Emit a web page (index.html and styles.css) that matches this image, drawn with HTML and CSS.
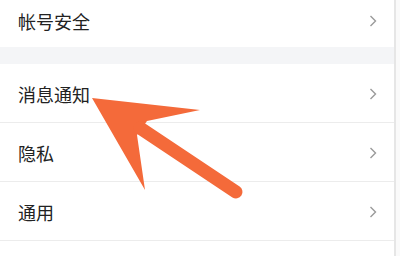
FILE: index.html
```
<!DOCTYPE html>
<html lang="zh-CN">
<head>
<meta charset="utf-8">
<title>设置</title>
<link rel="stylesheet" href="styles.css">
</head>
<body>
<div class="page">
  <div class="row first">
    <span class="label">帐号安全</span>
    <svg class="chev" width="8" height="12" viewBox="0 0 8 12"><polyline points="1.5,1 6.5,6 1.5,11" fill="none" stroke="#9a9a9a" stroke-width="1.4"/></svg>
  </div>
  <div class="gap"></div>
  <div class="row">
    <span class="label">消息通知</span>
    <svg class="chev" width="8" height="12" viewBox="0 0 8 12"><polyline points="1.5,1 6.5,6 1.5,11" fill="none" stroke="#9a9a9a" stroke-width="1.4"/></svg>
  </div>
  <div class="row">
    <span class="label">隐私</span>
    <svg class="chev" width="8" height="12" viewBox="0 0 8 12"><polyline points="1.5,1 6.5,6 1.5,11" fill="none" stroke="#9a9a9a" stroke-width="1.4"/></svg>
  </div>
  <div class="row">
    <span class="label">通用</span>
    <svg class="chev" width="8" height="12" viewBox="0 0 8 12"><polyline points="1.5,1 6.5,6 1.5,11" fill="none" stroke="#9a9a9a" stroke-width="1.4"/></svg>
  </div>
  <div class="row last"></div>
</div>
<svg class="arrow" width="400" height="256" viewBox="0 0 400 256">
  <polygon points="92,98 200,110 147,121 137,135 145,190" fill="#f46a3a"/>
  <line x1="140" y1="128" x2="236" y2="192" stroke="#f46a3a" stroke-width="13" stroke-linecap="round"/>
</svg>
</body>
</html>
```
FILE: styles.css
```
html, body {
  margin: 0;
  padding: 0;
  background: #fafafa;
  overflow: hidden;
}
body {
  width: 400px;
  height: 256px;
  position: relative;
  font-family: "Noto Sans CJK SC", "Noto Sans", sans-serif;
}
.page {
  width: 394px;
  height: 256px;
  overflow: hidden;
  background: #fff;
  border-right: 2px solid #e6e6e6;
}
.row {
  height: 56px;
  border-bottom: 1px solid #ececec;
  display: flex;
  align-items: center;
  justify-content: space-between;
  padding: 2px 17px 0 18px;
}
.row.first {
  height: 42px;
  padding-top: 0;
  padding-bottom: 5px;
  border-bottom: none;
}
.row.last {
  height: 14px;
  border-bottom: none;
}
.gap {
  height: 17px;
  background: #f4f5f7;
}
.label {
  font-size: 18px;
  color: #222;
  line-height: 1;
}
.chev {
  display: block;
}
.arrow {
  position: absolute;
  left: 0;
  top: 0;
}
```
